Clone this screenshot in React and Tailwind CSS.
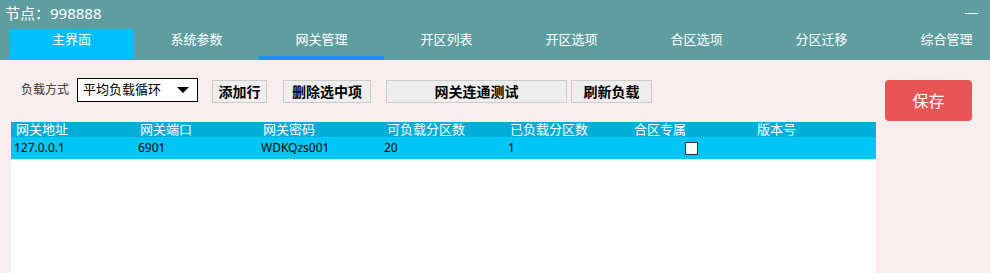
import React from "react";

const tabs = ["主界面", "系统参数", "网关管理", "开区列表", "开区选项", "合区选项", "分区迁移", "综合管理"];

const cols = [
  { title: "网关地址", w: "w-[124px]" },
  { title: "网关端口", w: "w-[123px]" },
  { title: "网关密码", w: "w-[124px]" },
  { title: "可负载分区数", w: "w-[123px]" },
  { title: "已负载分区数", w: "w-[124px]" },
  { title: "合区专属", w: "w-[123px]" },
  { title: "版本号", w: "flex-1" },
];

const ToolButton = ({ width, children }) => (
  <button className={`${width} h-[23px] mt-[2px] bg-[#eeeeee] border border-[#cccccc] text-[14px] font-bold text-black leading-none`}>
    {children}
  </button>
);

const App = () => {
  return (
    <div
      className="w-[990px] h-[273px] overflow-hidden flex flex-col bg-[#f9eded]"
      style={{ fontFamily: '"Noto Sans", "Noto Sans CJK SC", sans-serif' }}
    >
      {/* Header */}
      <div className="bg-[#5f9ea0] h-[60px] shrink-0 flex flex-col">
        <div className="relative h-[29px] pl-[5px] pt-[2px] text-[15px] text-white leading-[22px]">
          节点：998888
          <span className="absolute left-[965px] top-[13px] w-[13px] h-[1px] bg-white"></span>
        </div>
        <div className="flex h-[31px] pl-[9px] overflow-hidden">
          {tabs.map((t, i) => (
            <div
              key={t}
              className={`w-[125px] shrink-0 text-center text-[13px] text-white leading-[18px] pt-[1px] ${
                i === 0 ? "bg-[#00bfff]" : ""
              } ${i === 2 ? "border-b-4 border-[#1e90ff]" : ""}`}
            >
              {t}
            </div>
          ))}
        </div>
      </div>

      {/* Body */}
      <div className="flex flex-1 min-h-0">
        <div className="w-[876px] pl-[11px] flex flex-col">
          <div className="flex items-start mt-[18px] h-[24px]">
            <span className="ml-[10px] w-[56px] text-[12px] text-[#333333] leading-[24px]">负载方式</span>
            <div className="w-[121px] h-[24px] bg-white border border-black flex items-center pl-[5px] pr-[8px] text-[13px] text-black">
              <span className="flex-1">平均负载循环</span>
              <svg width="12" height="7" viewBox="0 0 12 7">
                <polygon points="0,0 12,0 6,6" fill="#000" />
              </svg>
            </div>
            <div className="ml-[14px]">
              <ToolButton width="w-[55px]">添加行</ToolButton>
            </div>
            <div className="ml-[16px]">
              <ToolButton width="w-[88px]">删除选中项</ToolButton>
            </div>
            <div className="ml-[15px]">
              <ToolButton width="w-[181px]">网关连通测试</ToolButton>
            </div>
            <div className="ml-[4px]">
              <ToolButton width="w-[81px]">刷新负载</ToolButton>
            </div>
          </div>

          {/* Table */}
          <div className="mt-[20px] flex-1 flex flex-col bg-white">
            <div className="flex h-[15px] bg-[#00aed8] text-white text-[13px] leading-[14px]">
              {cols.map((c) => (
                <div key={c.title} className={`${c.w} pl-[5px] whitespace-nowrap`}>
                  {c.title}
                </div>
              ))}
            </div>
            <div className="flex h-[22px] bg-[#00c6f5] text-[12px] text-black items-center">
              <div className="w-[124px] pl-[3px]">127.0.0.1</div>
              <div className="w-[123px] pl-[3px]">6901</div>
              <div className="w-[124px] pl-[3px]">WDKQzs001</div>
              <div className="w-[123px] pl-[2px]">20</div>
              <div className="w-[124px] pl-[3px]">1</div>
              <div className="w-[123px] flex justify-center pl-[2px]">
                <div className="w-[13px] h-[13px] bg-white border border-[#333333]"></div>
              </div>
              <div className="flex-1"></div>
            </div>
          </div>
        </div>

        <div className="pl-[9px] pt-[20px]">
          <button className="w-[87px] h-[41px] rounded-[4px] bg-[#e65454] text-white text-[16px]">保存</button>
        </div>
      </div>
    </div>
  );
};

export default App;
